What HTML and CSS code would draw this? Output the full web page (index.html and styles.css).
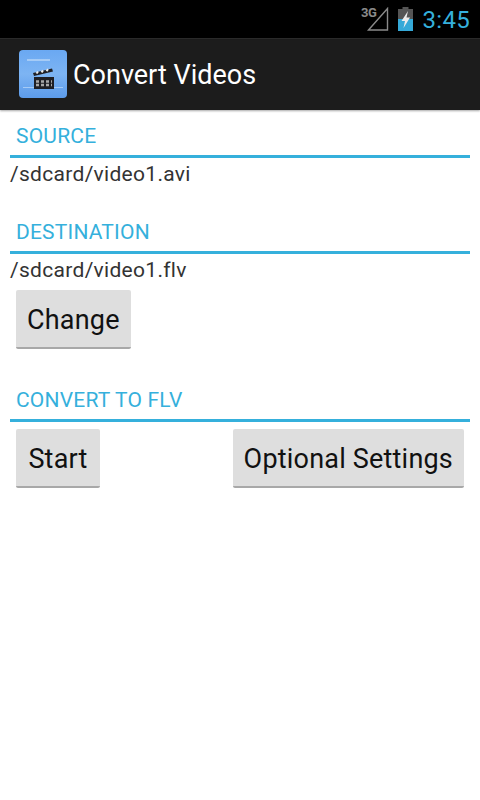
FILE: index.html
```html
<!DOCTYPE html>
<html lang="en">
<head>
    <meta charset="UTF-8">
    <meta name="viewport" content="width=device-width, initial-scale=1.0">
    <title>Convert Videos</title>
    <link rel="stylesheet" href="styles.css">
</head>
<body>
    <div class="status-bar">
        <span class="network-label">3G</span>
        <svg class="signal-icon" width="22" height="24" viewBox="0 0 22 24">
            <path d="M1.500 23 L20.500 1.500 V23 Z" fill="none" stroke="#8a8a8a" stroke-width="1.400"/>
        </svg>
        <svg class="battery-icon" width="15" height="24" viewBox="0 0 15 24">
            <rect x="4.500" y="0" width="6" height="3" fill="#555"/>
            <rect x="0" y="2" width="15" height="10" fill="#555"/>
            <rect x="0" y="12" width="15" height="12" fill="#35a9d8"/>
            <path d="M10 4 L3.500 14 H7 L5.500 21 L12 10.500 H8.500 Z" fill="#ececec"/>
        </svg>
        <span class="clock">3:45</span>
    </div>

    <div class="action-bar">
        <svg class="app-icon" width="48" height="48" viewBox="0 0 48 48">
            <defs>
                <linearGradient id="icon-bg" x1="0" y1="0" x2="0" y2="1">
                    <stop offset="0" stop-color="#6aa8f2"/>
                    <stop offset="0.5" stop-color="#7db4f3"/>
                    <stop offset="1" stop-color="#5c9bea"/>
                </linearGradient>
            </defs>
            <rect x="0" y="0" width="48" height="48" rx="4" fill="url(#icon-bg)"/>
            <rect x="8" y="9" width="23" height="2" fill="#a5cbf6"/>
            <rect x="4" y="37" width="40" height="1" fill="#a5cbf6"/>
            <rect x="15" y="27" width="20" height="12" fill="#1f1f24"/>
            <path d="M14 23 L33 18.500 L34 21.500 L15 26 Z" fill="#1f1f24"/>
            <path d="M17.500 23.500 L19 21.500 M22.500 22.300 L24 20.300 M27.500 21.100 L29 19.100" stroke="#ededed" stroke-width="2"/>
            <path d="M17 31.500 H33 M17 35 H33" stroke="#a8a8a8" stroke-width="2.500" stroke-dasharray="3 2"/>
        </svg>
        <span class="app-title">Convert Videos</span>
    </div>

    <div class="content">
        <div class="section">
            <div class="section-header">SOURCE</div>
            <div class="path-text">/sdcard/video1.avi</div>
        </div>

        <div class="section">
            <div class="section-header">DESTINATION</div>
            <div class="path-text">/sdcard/video1.flv</div>
            <div class="button-row">
                <button class="btn">Change</button>
            </div>
        </div>

        <div class="section">
            <div class="section-header">CONVERT TO FLV</div>
            <div class="button-row split">
                <button class="btn btn-start">Start</button>
                <button class="btn">Optional Settings</button>
            </div>
        </div>
    </div>
</body>
</html>
```

FILE: styles.css
```css
* {
    margin: 0;
    padding: 0;
    box-sizing: border-box;
}

body {
    font-family: 'Roboto', 'Liberation Sans', sans-serif;
    background: #fff;
    width: 480px;
    height: 800px;
    overflow: hidden;
}

.status-bar {
    height: 38px;
    background: #000;
    display: flex;
    align-items: center;
    justify-content: flex-end;
    padding-right: 10px;
    position: relative;
}

.network-label {
    position: absolute;
    left: 361px;
    top: 5px;
    font-size: 13px;
    font-weight: bold;
    color: #8a8a8a;
    letter-spacing: -0.5px;
}

.signal-icon {
    margin-right: 9px;
}

.battery-icon {
    margin-right: 10px;
}

.clock {
    font-size: 24px;
    color: #35b0dc;
    letter-spacing: 0.3px;
    padding-top: 2px;
}

.action-bar {
    height: 72px;
    background: #1c1c1c;
    border-top: 1px solid #2a2a2a;
    box-shadow: 0 1px 2px rgba(0, 0, 0, 0.35);
    display: flex;
    align-items: center;
    padding-left: 19px;
    padding-bottom: 2px;
}

.app-title {
    color: #fff;
    font-size: 27px;
    margin-left: 6px;
    padding-top: 2px;
}

.content {
    padding: 10px 10px 0;
}

.section {
    margin-bottom: 26px;
}

.section-header {
    color: #35b0dc;
    font-size: 21px;
    letter-spacing: 0.2px;
    height: 38px;
    line-height: 32px;
    padding-left: 6px;
    border-bottom: 3px solid #35b0dc;
}

.path-text {
    color: #333;
    font-size: 21px;
    letter-spacing: 0.3px;
    line-height: 32px;
}

.button-row {
    display: flex;
    padding: 4px 6px 9px;
}

.button-row.split {
    justify-content: space-between;
    padding-top: 7px;
}

.btn {
    font-family: inherit;
    font-size: 27px;
    letter-spacing: 0.2px;
    color: #111;
    height: 59px;
    padding: 2px 11px 0;
    background: #dedede;
    border: none;
    border-bottom: 2px solid #a8a8a8;
    border-radius: 2px;
}

.btn-start {
    min-width: 84px;
}
```
